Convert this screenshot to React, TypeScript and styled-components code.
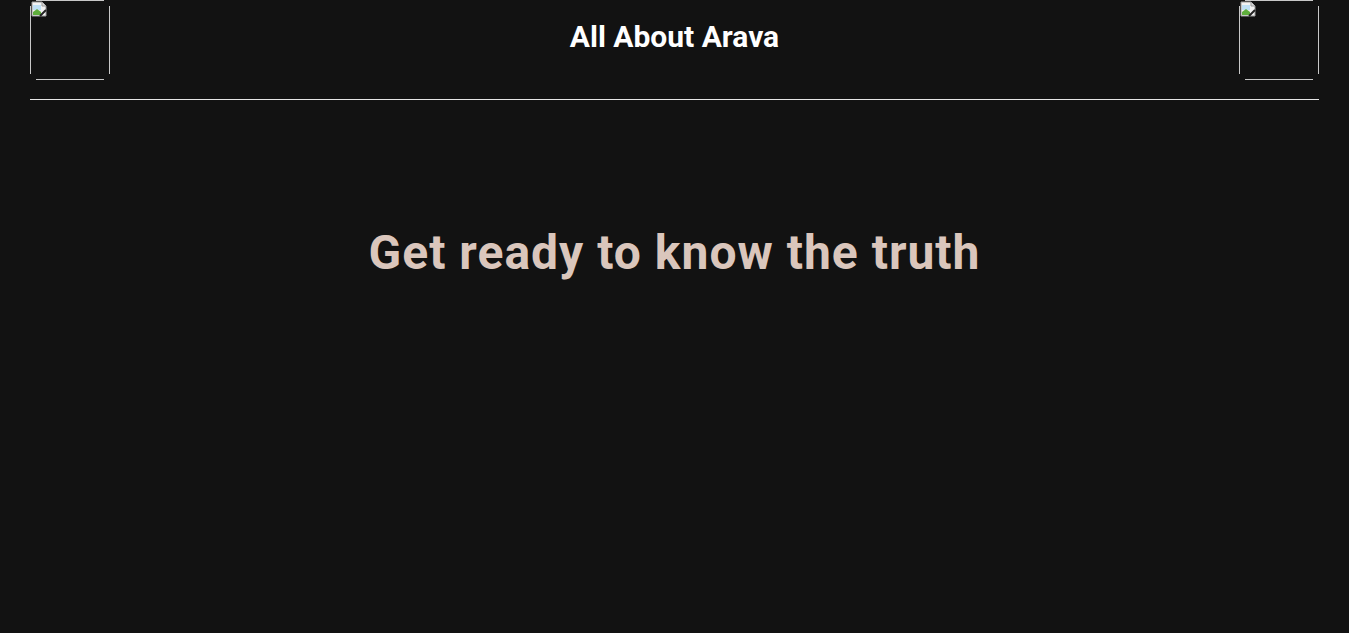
import React from "react";
import styled, { createGlobalStyle } from "styled-components";

const Global = createGlobalStyle`
  html, body { margin: 0; padding: 0; background: #121212; }
  body { font-family: Roboto, "Liberation Sans", sans-serif; }
`;

const Page = styled.div`
  min-height: 633px;
  background: #121212;
  padding: 0 30px;
  box-sizing: border-box;
`;

const Header = styled.header`
  display: flex;
  align-items: flex-start;
  justify-content: space-between;
  height: 80px;
`;

const Logo = styled.div`
  width: 80px;
  height: 80px;
  position: relative;
  background:
    linear-gradient(#c8c8c8, #c8c8c8) 6px 0 / 68px 1px no-repeat,
    linear-gradient(#c8c8c8, #c8c8c8) 6px 79px / 68px 1px no-repeat,
    linear-gradient(#c8c8c8, #c8c8c8) 0 6px / 1px 68px no-repeat,
    linear-gradient(#c8c8c8, #c8c8c8) 79px 6px / 1px 68px no-repeat;
`;

const Broken = styled.svg`
  position: absolute;
  left: 1px;
  top: 1px;
`;

const Title = styled.h1`
  margin: 0;
  padding-top: 20px;
  font-size: 30px;
  font-weight: 700;
  color: #ffffff;
  line-height: 34px;
`;

const Rule = styled.hr`
  margin: 19px 0 0 0;
  border: none;
  border-top: 1px solid #e6e6e6;
  height: 0;
`;

const Hero = styled.h2`
  margin: 125px 0 0 0;
  text-align: center;
  font-size: 48px;
  font-weight: 700;
  color: #dac6bc;
  letter-spacing: 1px;
  line-height: 56px;
`;

const BrokenIcon = () => (
  <Broken width="16" height="16" viewBox="0 0 16 16">
    <path d="M1 1h10l4 4v10H1z" fill="#f2f2f2" stroke="#9a9a9a" strokeWidth="1" />
    <path d="M11 1v4h4" fill="#dcdcdc" stroke="#9a9a9a" strokeWidth="1" />
    <path d="M2 4h8v5H2z" fill="#bfe0f5" />
    <path d="M2 11l4-3 4 3v3H2z" fill="#5fae3c" />
    <path d="M9 15l6-6" stroke="#222" strokeWidth="2" />
  </Broken>
);

export default function App() {
  return (
    <>
      <Global />
      <Page>
        <Header>
          <Logo>
            <BrokenIcon />
          </Logo>
          <Title>All About Arava</Title>
          <Logo>
            <BrokenIcon />
          </Logo>
        </Header>
        <Rule />
        <Hero>Get ready to know the truth</Hero>
      </Page>
    </>
  );
}
